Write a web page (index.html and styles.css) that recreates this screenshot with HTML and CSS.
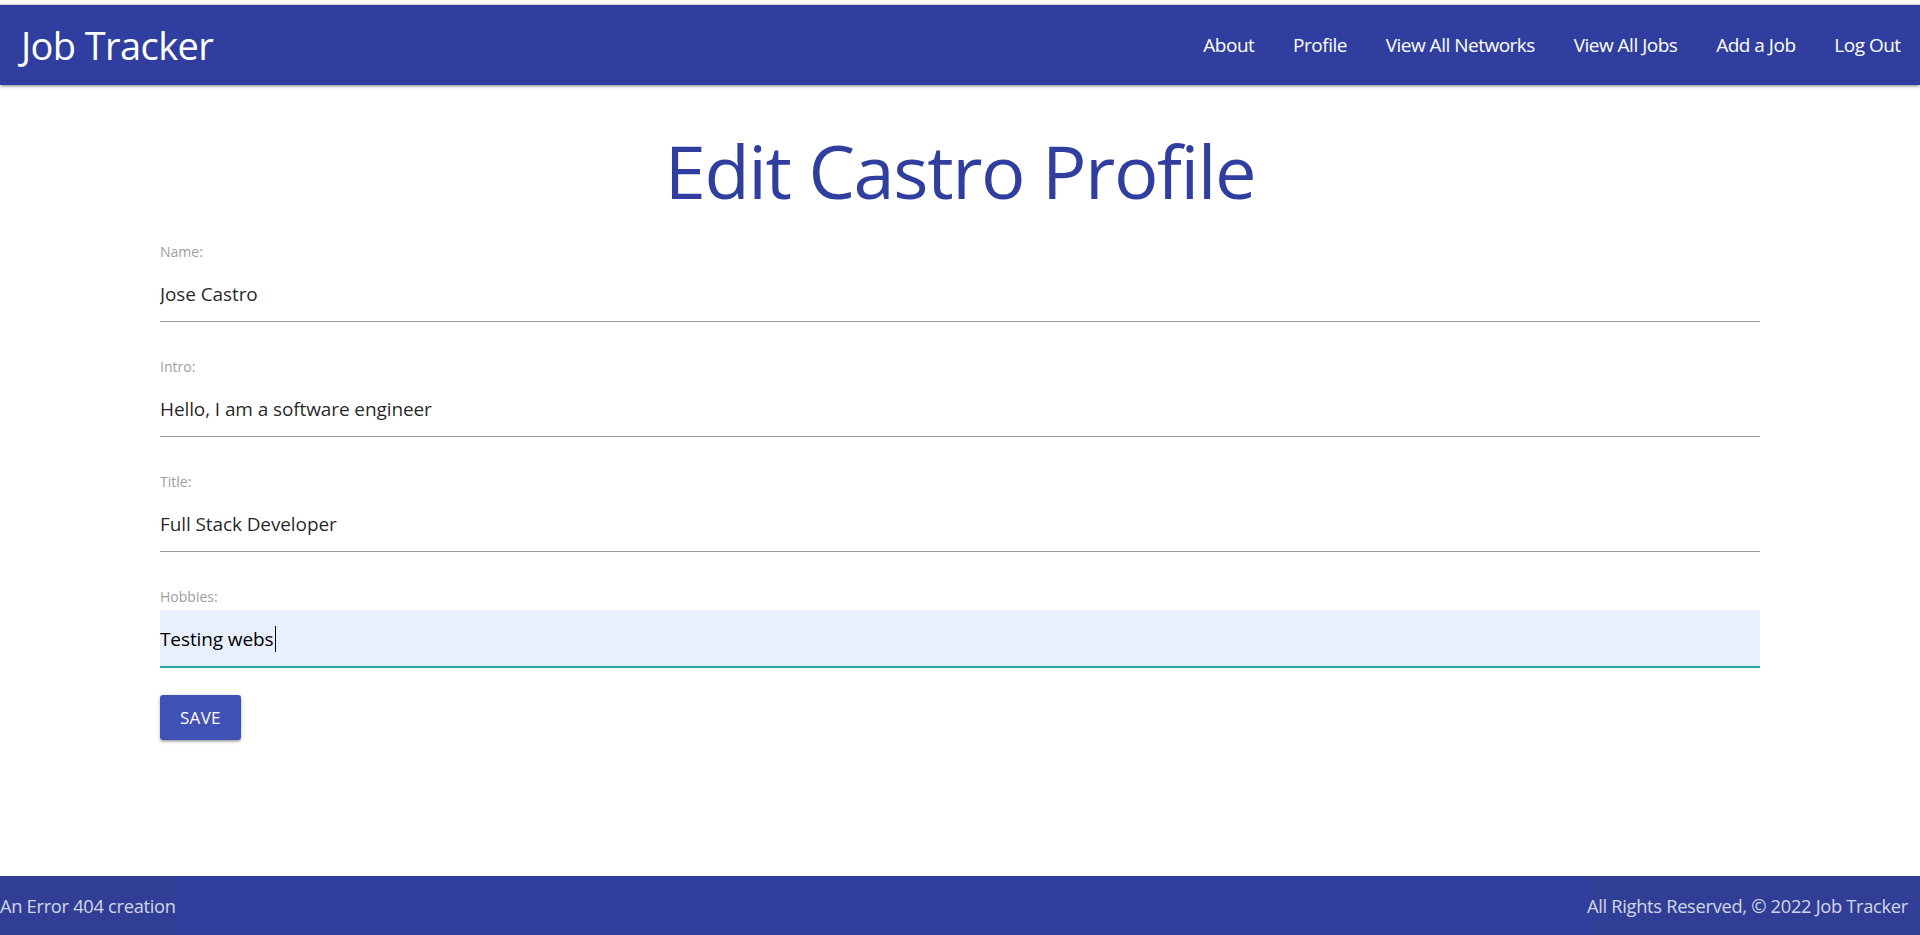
FILE: index.html
```html
<!DOCTYPE html>
<html lang="en">
<head>
<meta charset="utf-8">
<title>Job Tracker</title>
<link rel="stylesheet" href="styles.css">
</head>
<body>
<div class="page">
  <div class="top-gap"></div>
  <nav class="navbar">
    <a class="brand" href="#">Job Tracker</a>
    <ul class="nav-links">
      <li><a href="#">About</a></li>
      <li><a href="#">Profile</a></li>
      <li><a href="#">View All Networks</a></li>
      <li><a href="#">View All Jobs</a></li>
      <li><a href="#">Add a Job</a></li>
      <li><a href="#">Log Out</a></li>
    </ul>
  </nav>
  <main class="main">
    <h1 class="title">Edit Castro Profile</h1>
    <form class="form">
      <div class="field">
        <label class="label" for="name">Name:</label>
        <input class="input" id="name" type="text" value="Jose Castro">
      </div>
      <div class="field">
        <label class="label" for="intro">Intro:</label>
        <input class="input" id="intro" type="text" value="Hello, I am a software engineer">
      </div>
      <div class="field">
        <label class="label" for="title">Title:</label>
        <input class="input" id="title" type="text" value="Full Stack Developer">
      </div>
      <div class="field">
        <label class="label" for="hobbies">Hobbies:</label>
        <div class="input input-focused"><span>Testing webs</span><span class="caret"></span></div>
      </div>
      <button class="btn" type="button">Save</button>
    </form>
  </main>
  <footer class="footer">
    <div class="footer-copy">An Error 404 creation</div>
    <div class="footer-copy footer-right">All Rights Reserved, © 2022 Job Tracker</div>
  </footer>
</div>
</body>
</html>
```
FILE: styles.css
```css
* { box-sizing: border-box; }
html, body { margin: 0; padding: 0; }
body {
  font-family: "Open Sans", "Noto Sans", "Liberation Sans", sans-serif;
  background: #ffffff;
  color: rgba(0,0,0,0.87);
}
.page {
  min-height: 935px;
  display: flex;
  flex-direction: column;
}
.top-gap {
  height: 5px;
  border-bottom: 1px solid #dedede;
  flex: none;
}
.navbar {
  flex: none;
  height: 80px;
  background: #303f9f;
  display: flex;
  align-items: center;
  justify-content: space-between;
  box-shadow: 0 2px 2px 0 rgba(0,0,0,.14), 0 3px 1px -2px rgba(0,0,0,.12), 0 1px 5px 0 rgba(0,0,0,.2);
  position: relative;
  z-index: 1;
}
.brand {
  color: #ffffff;
  text-decoration: none;
  font-size: 38px;
  padding-left: 21px;
  letter-spacing: -0.6px;
}
.nav-links {
  list-style: none;
  margin: 0;
  padding: 0;
  display: flex;
  height: 80px;
}
.nav-links a {
  display: block;
  color: #ffffff;
  text-decoration: none;
  font-size: 19px;
  line-height: 80px;
  padding: 0 19.4px;
  letter-spacing: -0.5px;
}
.main {
  flex: 1;
  width: 1600px;
  margin: 0 auto;
}
.title {
  margin: 40px 0 27px;
  font-size: 74px;
  line-height: 92px;
  font-weight: 400;
  color: #303f9f;
  text-align: center;
  letter-spacing: -1.4px;
}
.form { margin: 0; }
.field {
  margin-bottom: 37px;
  display: flex;
  flex-direction: column;
}
.label {
  font-size: 14px;
  line-height: 15px;
  color: #9e9e9e;
  margin-bottom: 6px;
}
.input {
  font-family: inherit;
  font-size: 19px;
  color: rgba(0,0,0,0.87);
  height: 57px;
  padding: 2px 0 0 0;
  margin: 0;
  border: none;
  border-bottom: 1px solid #9e9e9e;
  background: transparent;
  outline: none;
  width: 100%;
  letter-spacing: -0.1px;
}
.input-focused {
  display: flex;
  align-items: center;
  background: #e8f0fe;
  border-bottom: 1px solid #26a69a;
  box-shadow: 0 1px 0 0 #26a69a;
  color: #000000;
}
.caret {
  display: inline-block;
  width: 1px;
  height: 26px;
  background: #000000;
  margin-left: 1px;
}
.btn {
  margin-top: -9px;
  font-family: inherit;
  height: 45px;
  padding: 0 20px;
  border: none;
  border-radius: 3px;
  background: #3f51b5;
  color: #ffffff;
  font-size: 17px;
  text-transform: uppercase;
  letter-spacing: 0.3px;
  box-shadow: 0 2px 2px 0 rgba(0,0,0,.14), 0 3px 1px -2px rgba(0,0,0,.12), 0 1px 5px 0 rgba(0,0,0,.2);
}
.footer {
  flex: none;
  height: 59px;
  background: #303f9f;
  display: flex;
  justify-content: space-between;
  align-items: stretch;
}
.footer-copy {
  display: flex;
  align-items: center;
  background: rgba(51,51,51,0.08);
  color: rgba(255,255,255,0.8);
  font-size: 18.3px;
  letter-spacing: -0.3px;
}
.footer-right {
  padding-right: 12px;
}
```
